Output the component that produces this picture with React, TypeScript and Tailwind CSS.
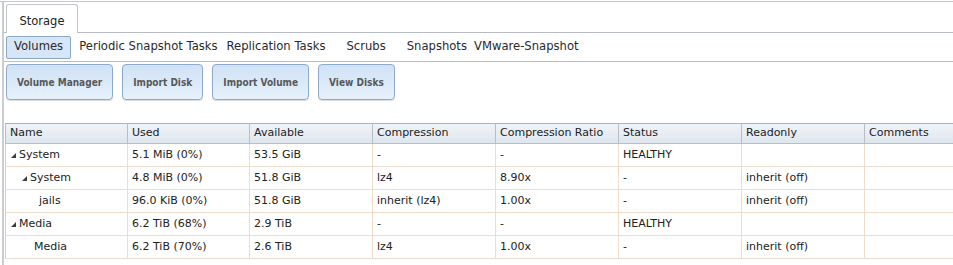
const subTabs = [
  { label: 'Periodic Snapshot Tasks', ml: 'ml-[8px]' },
  { label: 'Replication Tasks', ml: 'ml-[9px]' },
  { label: 'Scrubs', ml: 'ml-[21px]' },
  { label: 'Snapshots', ml: 'ml-[21px]' },
  { label: 'VMware-Snapshot', ml: 'ml-[7px]' },
];

const actions = ['Volume Manager', 'Import Disk', 'Import Volume', 'View Disks'];

const columns = [
  { name: 'Name', w: 'w-[122px]' },
  { name: 'Used', w: 'w-[122px]' },
  { name: 'Available', w: 'w-[123px]' },
  { name: 'Compression', w: 'w-[123px]' },
  { name: 'Compression Ratio', w: 'w-[123px]' },
  { name: 'Status', w: 'w-[123px]' },
  { name: 'Readonly', w: 'w-[123px]' },
  { name: 'Comments', w: 'w-[123px]' },
];

type Row = {
  name: string;
  indent: string;
  expander: boolean;
  cells: string[];
};

const rows: Row[] = [
  { name: 'System', indent: 'pl-[1px]', expander: true, cells: ['5.1 MiB (0%)', '53.5 GiB', '-', '-', 'HEALTHY', '', ''] },
  { name: 'System', indent: 'pl-[12px]', expander: true, cells: ['4.8 MiB (0%)', '51.8 GiB', 'lz4', '8.90x', '-', 'inherit (off)', ''] },
  { name: 'jails', indent: 'pl-[29px]', expander: false, cells: ['96.0 KiB (0%)', '51.8 GiB', 'inherit (lz4)', '1.00x', '-', 'inherit (off)', ''] },
  { name: 'Media', indent: 'pl-[1px]', expander: true, cells: ['6.2 TiB (68%)', '2.9 TiB', '-', '-', 'HEALTHY', '', ''] },
  { name: 'Media', indent: 'pl-[24px]', expander: false, cells: ['6.2 TiB (70%)', '2.6 TiB', 'lz4', '1.00x', '-', 'inherit (off)', ''] },
];

const Expander = () => (
  <svg width="5" height="5" viewBox="0 0 5 5" className="mr-[3px] mt-[1px] shrink-0">
    <polygon points="5,0 5,5 0,5" fill="#3c3c3c" />
  </svg>
);

export default function App() {
  return (
    <div className="w-[953px] h-[265px] overflow-hidden bg-white font-['DejaVu_Sans',sans-serif] text-[11px] text-[#222]">
      <div className="mt-px h-[264px] border-t border-[#c3c6cd]">
        <div className="ml-[2px] h-full border-l-2 border-[#c9ccd2]">
          {/* top tab */}
          <div className="flex items-end h-[31px] border-b border-[#b7bbc5]">
            <div className="ml-[2px] -mb-px h-[29px] w-[72px] flex justify-center pt-[11px] border border-b-0 border-[#c1c5cd] rounded-t-[3px] bg-white text-[11.5px] leading-none text-[#222]">
              Storage
            </div>
          </div>

          {/* sub tabs */}
          <div className="flex items-center h-[29px] border-b border-[#b7bbc5] pl-[2px] text-[11.6px] text-[#2a2a2a]">
            <div className="h-[23px] px-[7px] flex items-center rounded-[2px] border border-[#8aa7c4] bg-[#d6e6f6]">
              Volumes
            </div>
            {subTabs.map((t) => (
              <span key={t.label} className={t.ml}>
                {t.label}
              </span>
            ))}
          </div>

          {/* actions */}
          <div className="flex items-start gap-[9px] pl-[2px] pt-[2px] h-[60px]">
            {actions.map((a) => (
              <button
                key={a}
                className="h-[36px] px-[10px] rounded-[4px] border border-[#8eaac8] bg-gradient-to-b from-[#cfe2f6] to-[#e6f1fb] shadow-[0_1px_1px_rgba(0,0,0,0.15)] font-bold text-[10px] text-[#585858] font-['DejaVu_Sans_Condensed','DejaVu_Sans',sans-serif] [font-stretch:condensed]"
              >
                {a}
              </button>
            ))}
          </div>

          {/* volumes grid */}
          <div className="ml-[1px] mt-px">
            <table className="table-fixed border-collapse w-[1000px]">
              <thead>
                <tr className="h-[20px] bg-gradient-to-b from-[#f0f4f8] to-[#dde5ed]">
                  {columns.map((c) => (
                    <th
                      key={c.name}
                      className={`${c.w} text-left font-normal px-[4px] border border-[#b6bec7] border-t-[#a9b1ba]`}
                    >
                      {c.name}
                    </th>
                  ))}
                  <th className="border-t border-b border-[#b6bec7]" />
                </tr>
              </thead>
              <tbody>
                {rows.map((r, i) => (
                  <tr key={i} className="h-[23px]">
                    <td className="px-[4px] border border-[#eedccc] border-l-[#c9ccd2]">
                      <div className={`flex items-center ${r.indent}`}>
                        {r.expander && <Expander />}
                        <span>{r.name}</span>
                      </div>
                    </td>
                    {r.cells.map((c, j) => (
                      <td key={j} className="px-[4px] border border-[#eedccc] whitespace-nowrap">
                        {c}
                      </td>
                    ))}
                    <td className="border-b border-[#eedccc]" />
                  </tr>
                ))}
              </tbody>
            </table>
          </div>
        </div>
      </div>
    </div>
  );
}
